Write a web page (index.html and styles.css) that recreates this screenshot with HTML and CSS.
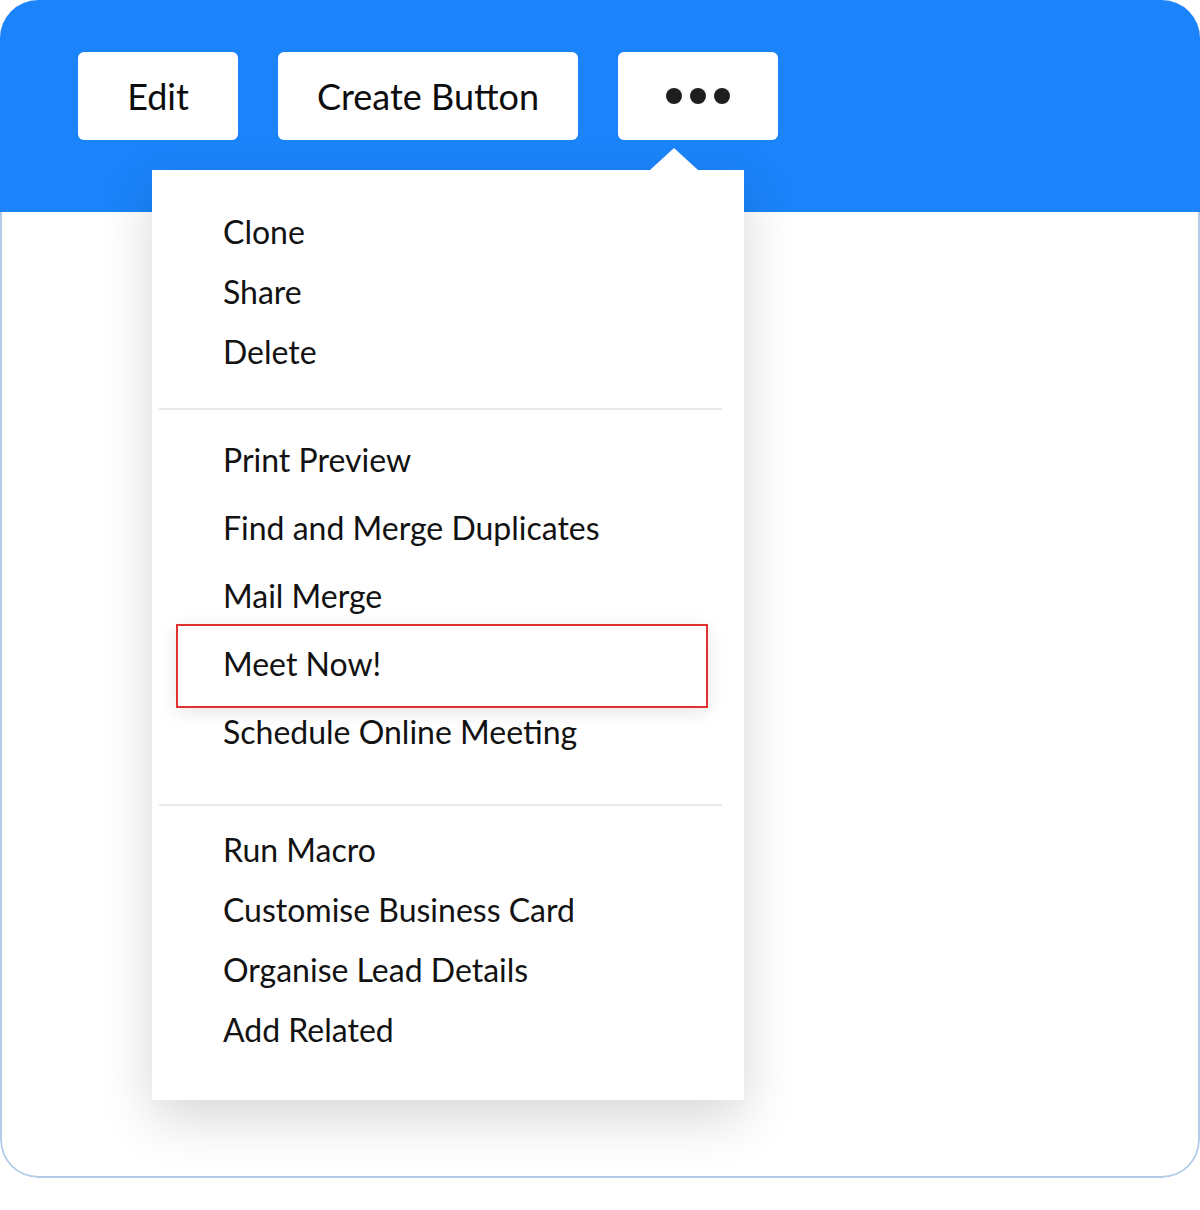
FILE: index.html
```html
<!DOCTYPE html>
<html lang="en">
<head>
  <meta charset="UTF-8">
  <title>Record Actions Menu</title>
  <link rel="stylesheet" href="styles.css">
</head>
<body>
  <div class="card">
    <!-- Toolbar -->
    <header class="toolbar">
      <button class="tool-btn edit">Edit</button>
      <button class="tool-btn create">Create Button</button>
      <button class="tool-btn more" aria-label="More">
        <span class="dot"></span><span class="dot"></span><span class="dot"></span>
      </button>
    </header>
    <div class="card-body"></div>

    <!-- Dropdown -->
    <div class="menu">
      <ul class="group first">
        <li>Clone</li>
        <li>Share</li>
        <li>Delete</li>
      </ul>
      <ul class="group second">
        <li>Print Preview</li>
        <li>Find and Merge Duplicates</li>
        <li>Mail Merge</li>
        <li class="highlight">Meet Now!</li>
        <li>Schedule Online Meeting</li>
      </ul>
      <ul class="group third">
        <li>Run Macro</li>
        <li>Customise Business Card</li>
        <li>Organise Lead Details</li>
        <li>Add Related</li>
      </ul>
    </div>
  </div>
</body>
</html>
```

FILE: styles.css
```css
body {
  margin: 0;
  font-family: Lato, "Open Sans", sans-serif;
  background-color: #ffffff;
  color: #121212;
}
.card {
  position: relative;
  width: 1200px;
  height: 1178px;
  border-radius: 38px;
  overflow: hidden;
  display: flex;
  flex-direction: column;
}
.toolbar {
  background-color: #1b84fa;
  height: 212px;
  box-sizing: border-box;
  padding: 52px 0 0 78px;
  display: flex;
  align-items: flex-start;
  gap: 40px;
}
.tool-btn {
  height: 88px;
  border: none;
  border-radius: 6px;
  background-color: #ffffff;
  font-family: inherit;
  font-size: 36px;
  color: #0d0d0d;
  padding: 0;
  display: flex;
  align-items: center;
  justify-content: center;
}
.tool-btn.edit {
  width: 160px;
}
.tool-btn.create {
  width: 300px;
}
.tool-btn.more {
  width: 160px;
  gap: 8px;
}
.dot {
  width: 16px;
  height: 16px;
  border-radius: 50%;
  background-color: #1f1f1f;
}
.card-body {
  flex: 1;
  border: 2px solid #b3cbe9;
  border-top: none;
  border-radius: 0 0 38px 38px;
}
.menu {
  position: absolute;
  left: 152px;
  top: 170px;
  width: 592px;
  height: 930px;
  box-sizing: border-box;
  background-color: #ffffff;
  box-shadow: 0 18px 50px rgba(0, 0, 0, 0.16);
}
.menu::before {
  content: "";
  position: absolute;
  top: -22px;
  left: 498px;
  border-left: 24px solid transparent;
  border-right: 24px solid transparent;
  border-bottom: 22px solid #ffffff;
}
.group {
  list-style: none;
  margin: 0;
  padding: 0;
}
.group li {
  position: relative;
  padding-left: 71px;
  font-size: 32px;
  line-height: 60px;
}
.group.first {
  padding: 32px 0 26px;
  margin-right: 22px;
  margin-left: 7px;
  border-bottom: 2px solid #e8e8e8;
}
.group.second {
  padding: 16px 0 38px;
  margin-right: 22px;
  margin-left: 7px;
  border-bottom: 2px solid #e8e8e8;
}
.group.second li {
  line-height: 68px;
}
.group.first li,
.group.second li {
  padding-left: 64px;
}
.group.third {
  padding: 14px 0 40px;
}
.highlight::after {
  content: "";
  position: absolute;
  top: -6px;
  bottom: -10px;
  left: 17px;
  right: 14px;
  border: 2px solid #e03131;
  box-shadow: 0 4px 18px rgba(0, 0, 0, 0.1);
}
```
